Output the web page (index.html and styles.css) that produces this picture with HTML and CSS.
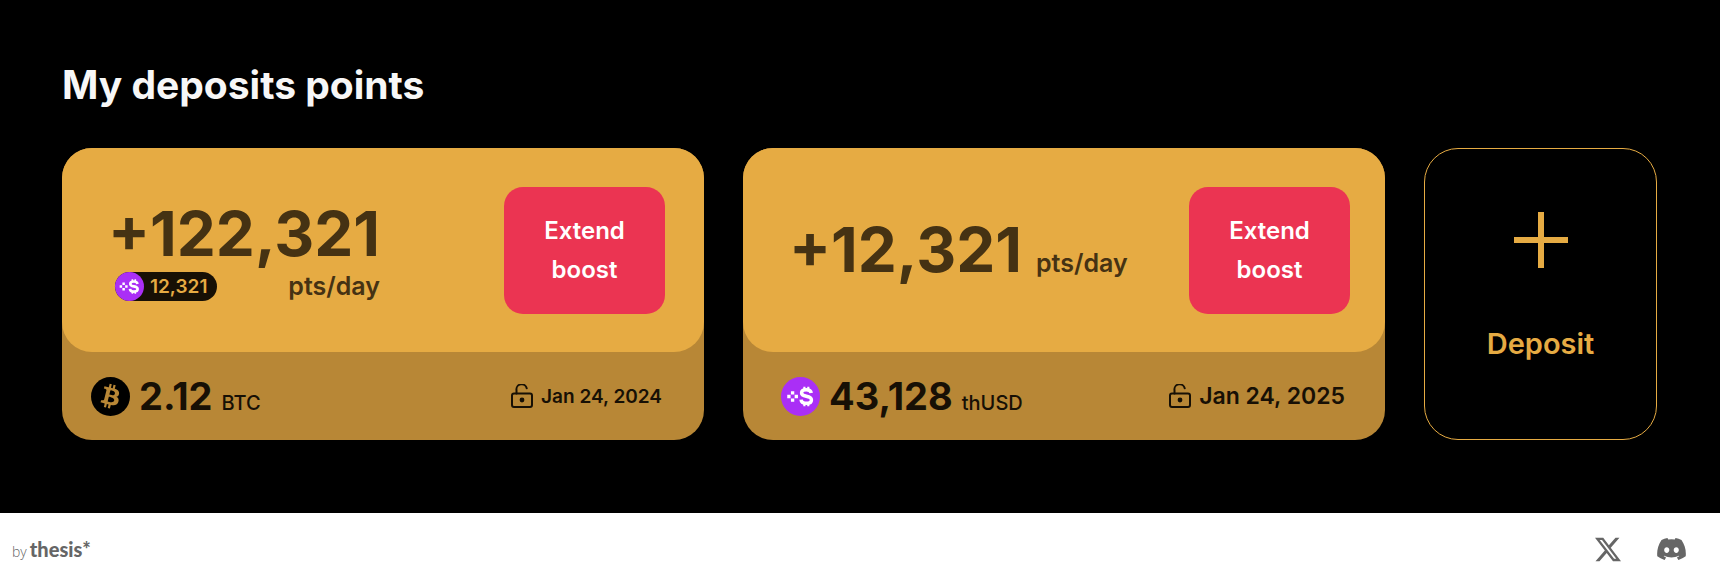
FILE: index.html
```html
<!DOCTYPE html>
<html lang="en">
<head>
<meta charset="utf-8">
<meta name="viewport" content="width=device-width, initial-scale=1">
<title>My deposits points</title>
<link rel="stylesheet" href="styles.css">
</head>
<body>
<svg class="sprite" aria-hidden="true">
  <symbol id="thusd" viewBox="0 0 40 40">
    <circle cx="20" cy="20" r="20" fill="#aa2ff6"/>
    <path d="M10.200 14.500h3.400v3.400h-3.400zM6.400 18.300h3.400v3.400h-3.400zM14 18.300h3.400v3.400h-3.400zM10.200 22.100h3.400v3.400h-3.400z" fill="#fff"/>
    <path d="M31 16.500c-.3-2.300-2.200-3.400-5-3.400-3 0-4.900 1.200-4.900 3.300 0 2.300 2 2.800 4.900 3.400 3.200.6 5.200 1.300 5.200 3.700 0 2.300-2.200 3.500-5.200 3.500-3.200 0-5.200-1.300-5.400-3.800" fill="none" stroke="#fff" stroke-width="3.600"/>
    <path d="M24 10v3M28 10v3M24 27v3M28 27v3" stroke="#fff" stroke-width="2.200"/>
  </symbol>
  <symbol id="lock" viewBox="0 0 22 24">
    <g fill="none" stroke="currentColor" stroke-width="2" stroke-linecap="round" stroke-linejoin="round">
      <rect x="1" y="9.500" width="20" height="13.500" rx="2"/>
      <path d="M5.500 9.500V6.300a5.200 5.200 0 0 1 10.200-2"/>
    </g>
    <circle cx="11" cy="16" r="2.400" fill="currentColor"/>
  </symbol>
</svg>

<main class="deposits">
  <h1 class="title">My deposits points</h1>
  <div class="cards">
    <article class="card">
      <div class="card-top">
        <div class="points points-stacked">
          <p class="amount">+122,321</p>
          <div class="points-row">
            <span class="pill"><svg class="pill-icon" aria-hidden="true"><use href="#thusd"/></svg>12,321</span>
            <span class="unit">pts/day</span>
          </div>
        </div>
        <button class="boost" type="button">Extend boost</button>
      </div>
      <div class="card-bottom">
        <div class="balance">
          <svg class="coin" viewBox="0 0 24 24" aria-hidden="true"><circle cx="12" cy="12" r="12" fill="#000"/><path fill="#b88736" fill-rule="evenodd" d="M17.288 10.291c.24-1.590-.974-2.450-2.640-3.030l.54-2.153-1.315-.33-.525 2.107c-.345-.087-.705-.167-1.064-.25l.526-2.127-1.320-.33-.54 2.165c-.285-.067-.565-.132-.84-.2l-1.815-.45-.35 1.407s.975.225.955.236c.535.136.63.486.615.766l-1.477 5.920c-.075.166-.24.406-.614.314.015.02-.96-.24-.96-.24l-.66 1.510 1.710.426.93.242-.54 2.190 1.320.327.54-2.170c.36.1.705.19 1.050.273l-.51 2.154 1.320.33.545-2.190c2.240.427 3.930.257 4.640-1.774.57-1.637-.03-2.580-1.217-3.196.854-.193 1.500-.76 1.680-1.930zm-3 4.220c-.404 1.640-3.157.75-4.050.53l.72-2.900c.896.23 3.757.67 3.330 2.370zm.41-4.240c-.37 1.490-2.662.735-3.405.55l.654-2.640c.744.18 3.137.524 2.750 2.090z"/></svg>
          <span class="value">2.12</span><span class="currency">BTC</span>
        </div>
        <div class="unlock"><svg class="lock" aria-hidden="true"><use href="#lock"/></svg><time datetime="2024-01-24">Jan 24, 2024</time></div>
      </div>
    </article>

    <article class="card card-wide">
      <div class="card-top">
        <div class="points points-inline">
          <p class="amount">+12,321</p>
          <span class="unit">pts/day</span>
        </div>
        <button class="boost" type="button">Extend boost</button>
      </div>
      <div class="card-bottom">
        <div class="balance">
          <svg class="coin" aria-hidden="true"><use href="#thusd"/></svg>
          <span class="value">43,128</span><span class="currency">thUSD</span>
        </div>
        <div class="unlock unlock-large"><svg class="lock" aria-hidden="true"><use href="#lock"/></svg><time datetime="2025-01-24">Jan 24, 2025</time></div>
      </div>
    </article>

    <button class="new-deposit" type="button">
      <svg class="plus" viewBox="0 0 54 56" aria-hidden="true"><path d="M24 0h6v25h24v6H30v25h-6V31H0v-6h24z" fill="currentColor"/></svg>
      <span>Deposit</span>
    </button>
  </div>
</main>

<footer class="footer">
  <a class="brand" href="#"><span class="by">by</span><span class="thesis">thesis*</span></a>
  <nav class="social">
    <a href="#" aria-label="X"><svg class="x-icon" viewBox="0 1 24 22" aria-hidden="true"><path fill="currentColor" d="M18.901 1.153h3.680l-8.040 9.190L24 22.846h-7.406l-5.800-7.584-6.638 7.584H.474l8.600-9.830L0 1.154h7.594l5.243 6.932ZM17.610 20.644h2.039L6.486 3.240H4.298Z"/></svg></a>
    <a href="#" aria-label="Discord"><svg class="discord-icon" viewBox="0 2.800 24 18.400" aria-hidden="true"><path fill="currentColor" d="M20.317 4.370a19.791 19.791 0 0 0-4.885-1.515.074.074 0 0 0-.079.037c-.21.375-.444.864-.608 1.250a18.270 18.270 0 0 0-5.487 0 12.640 12.640 0 0 0-.617-1.250.077.077 0 0 0-.079-.037A19.736 19.736 0 0 0 3.677 4.370a.07.07 0 0 0-.032.027C.533 9.046-.32 13.580.099 18.058a.082.082 0 0 0 .031.057 19.900 19.900 0 0 0 5.993 3.030.078.078 0 0 0 .084-.028 14.090 14.090 0 0 0 1.226-1.994.076.076 0 0 0-.041-.106 13.107 13.107 0 0 1-1.872-.892.077.077 0 0 1-.008-.128 10.200 10.200 0 0 0 .372-.292.074.074 0 0 1 .077-.01c3.928 1.793 8.180 1.793 12.062 0a.074.074 0 0 1 .078.01c.12.098.246.198.373.292a.077.077 0 0 1-.006.127 12.299 12.299 0 0 1-1.873.892.077.077 0 0 0-.041.107c.36.698.772 1.362 1.225 1.993a.076.076 0 0 0 .084.028 19.839 19.839 0 0 0 6.002-3.030.077.077 0 0 0 .032-.054c.5-5.177-.838-9.674-3.549-13.660a.061.061 0 0 0-.031-.03zM8.020 15.330c-1.183 0-2.157-1.085-2.157-2.419 0-1.333.956-2.419 2.157-2.419 1.210 0 2.176 1.096 2.157 2.420 0 1.333-.956 2.418-2.157 2.418zm7.975 0c-1.183 0-2.157-1.085-2.157-2.419 0-1.333.955-2.419 2.157-2.419 1.210 0 2.176 1.096 2.157 2.420 0 1.333-.946 2.418-2.157 2.418z"/></svg></a>
  </nav>
</footer>
</body>
</html>
```
FILE: styles.css
```css
* {
  box-sizing: border-box;
}

body {
  margin: 0;
  min-height: 100vh;
  display: flex;
  flex-direction: column;
  background: #000;
  font-family: Inter, "Liberation Sans", sans-serif;
  font-weight: 500;
}

.sprite {
  position: absolute;
  width: 0;
  height: 0;
}

svg {
  display: block;
  flex: none;
}

p {
  margin: 0;
}

button {
  font: inherit;
  cursor: pointer;
}

.deposits {
  flex: 1;
  padding: 61px 63px 72px 62px;
}

.title {
  margin: 0 0 39px;
  color: #f7f7f7;
  font-size: 39px;
  font-weight: 700;
  line-height: 48px;
}

.cards {
  display: grid;
  grid-template-columns: minmax(0, 642fr) minmax(0, 642fr) minmax(0, 233fr);
  gap: 39px;
}

.card {
  border-radius: 30px;
  background: #b88736;
  color: #171005;
}

.card-top {
  display: flex;
  align-items: center;
  justify-content: space-between;
  min-height: 204px;
  padding: 38px 39px 38px 46px;
  border-radius: 30px;
  background: #e6ab43;
  color: #453213;
}

.points-row {
  display: flex;
  align-items: center;
  justify-content: space-between;
  padding-left: 7px;
}

.points-inline {
  display: flex;
  align-items: baseline;
  gap: 14px;
}

.amount {
  font-size: 62px;
  font-weight: 700;
  line-height: 72px;
}

.unit {
  font-size: 25px;
  font-weight: 600;
  line-height: 32px;
}

.pill {
  display: flex;
  align-items: center;
  gap: 6px;
  height: 29px;
  padding-right: 10px;
  border-radius: 15px;
  background: #171005;
  color: #e6ab43;
  font-size: 19px;
  font-weight: 600;
}

.pill-icon {
  width: 29px;
  height: 29px;
}

.boost {
  width: 161px;
  padding: 24px 30px 25px;
  border: 0;
  border-radius: 19px;
  background: #eb3452;
  color: #fff;
  font-size: 24px;
  font-weight: 600;
  line-height: 39px;
}

.card-bottom {
  display: flex;
  align-items: center;
  justify-content: space-between;
  min-height: 88px;
  padding: 0 42px 0 29px;
}

.card-wide .card-top {
  padding-right: 35px;
}

.card-wide .card-bottom {
  padding: 0 40px 0 38px;
}

.balance {
  display: flex;
  align-items: baseline;
  gap: 9px;
}

.coin {
  align-self: center;
  width: 39px;
  height: 39px;
}

.value {
  font-size: 38px;
  font-weight: 700;
  line-height: 48px;
}

.currency {
  font-size: 20px;
}

.unlock {
  display: flex;
  align-items: center;
  gap: 8px;
  font-size: 19px;
  font-weight: 600;
}

.unlock-large {
  font-size: 23px;
}

.lock {
  width: 22px;
  height: 24px;
}

.new-deposit {
  display: flex;
  flex-direction: column;
  align-items: center;
  gap: 56px;
  padding: 63px 0 0;
  border: 1px solid #e6ab43;
  border-radius: 34px;
  background: none;
  color: #e6ab43;
  font-size: 29px;
  font-weight: 600;
  line-height: 39px;
}

.plus {
  width: 54px;
  height: 56px;
}

.footer {
  display: flex;
  align-items: center;
  justify-content: space-between;
  min-height: 67px;
  padding: 5px 34px 0 12px;
  background: #fff;
  color: #666;
}

.footer a {
  color: inherit;
  text-decoration: none;
}

.brand {
  display: flex;
  align-items: baseline;
  gap: 3px;
  font-family: Lato, "Open Sans", sans-serif;
}

.by {
  font-family: "Open Sans", sans-serif;
  font-size: 14px;
  font-weight: 300;
}

.thesis {
  font-size: 20px;
  font-weight: 900;
}

.social {
  display: flex;
  align-items: center;
  gap: 36px;
}

.x-icon {
  width: 26px;
  height: 25px;
}

.discord-icon {
  width: 29px;
  height: 22px;
}
```
